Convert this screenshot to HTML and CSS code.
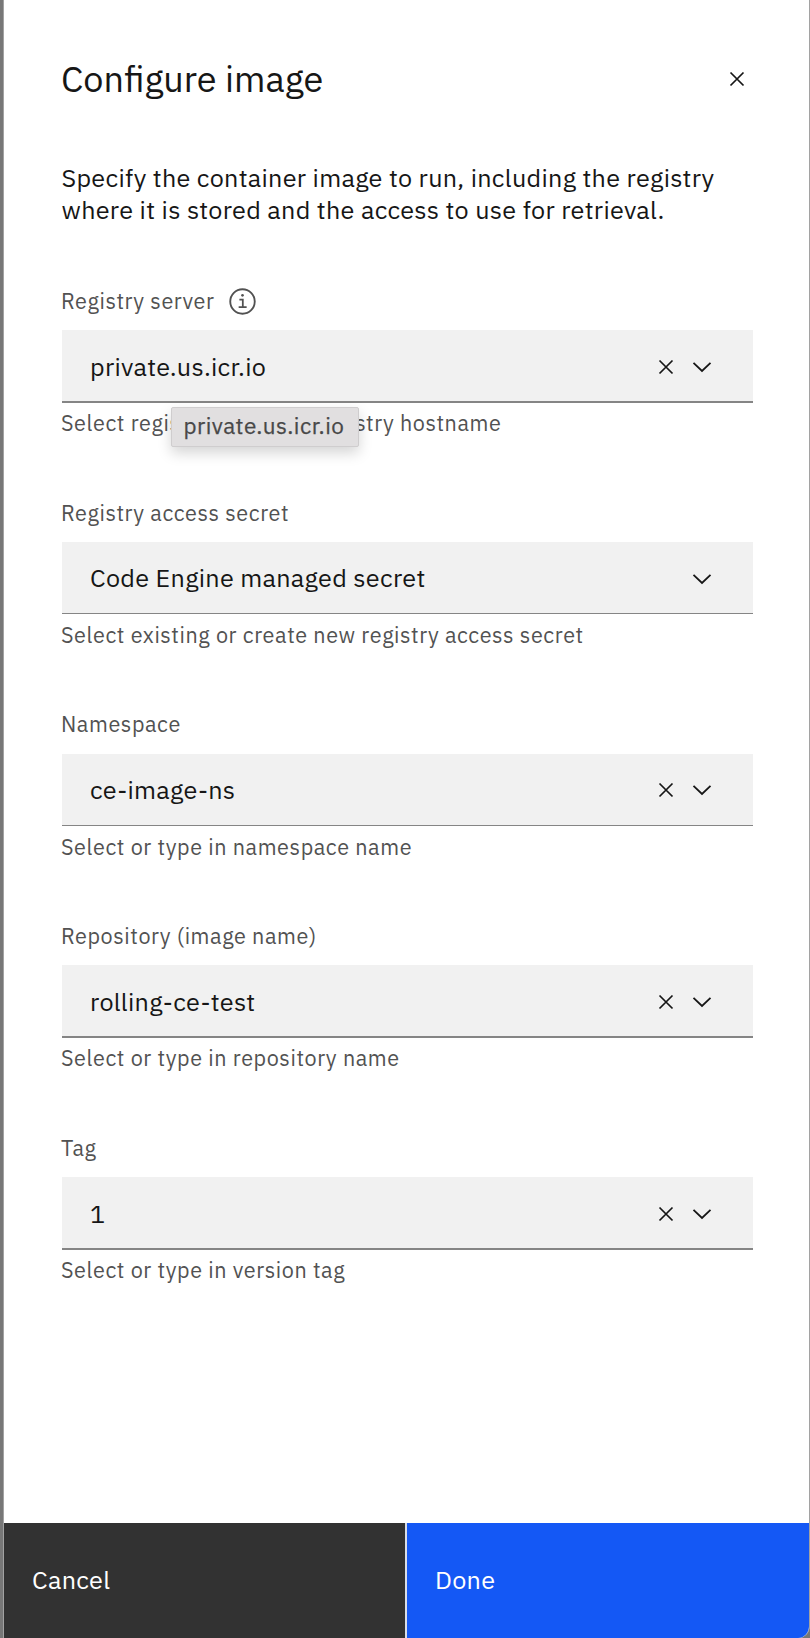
FILE: index.html
```html
<!DOCTYPE html>
<html lang="en">
<head>
<meta charset="utf-8">
<title>Configure image</title>
<link rel="stylesheet" href="styles.css">
</head>
<body>
<svg class="defs" width="0" height="0" aria-hidden="true">
  <symbol id="cross" viewBox="0 0 16 16"><path d="M1.5 1.5 14.5 14.5M14.5 1.5 1.5 14.5" fill="none" stroke="currentColor" stroke-width="1.7"/></symbol>
  <symbol id="chevron" viewBox="0 0 20 12"><path d="M1.5 1.8 10 10 18.500 1.800" fill="none" stroke="currentColor" stroke-width="1.8"/></symbol>
</svg>
<main class="panel">
  <header class="header">
    <h1 class="title">Configure image</h1>
    <button class="close" aria-label="Close"><svg class="cross"><use href="#cross"/></svg></button>
  </header>
  <p class="intro">Specify the container image to run, including the registry<br>where it is stored and the access to use for retrieval.</p>
  <form class="form">
    <section class="field">
      <div class="label">Registry server
        <svg class="info" viewBox="0 0 26 26"><circle cx="13" cy="13" r="11.800" fill="none" stroke="currentColor" stroke-width="1.8"/><path d="M10 11.200h3.300v7.300M9.300 18.500h7.700" fill="none" stroke="currentColor" stroke-width="1.700"/><circle cx="13" cy="7.100" r="1.300" fill="currentColor"/></svg>
      </div>
      <div class="box thick"><span class="value">private.us.icr.io</span><svg class="cross"><use href="#cross"/></svg><svg class="chevron"><use href="#chevron"/></svg></div>
      <div class="helper">Select registry or type in registry hostname</div>
      <div class="tooltip">private.us.icr.io</div>
    </section>
    <section class="field">
      <div class="label">Registry access secret</div>
      <div class="box"><span class="value">Code Engine managed secret</span><svg class="chevron"><use href="#chevron"/></svg></div>
      <div class="helper">Select existing or create new registry access secret</div>
    </section>
    <section class="field short">
      <div class="label">Namespace</div>
      <div class="box"><span class="value">ce-image-ns</span><svg class="cross"><use href="#cross"/></svg><svg class="chevron"><use href="#chevron"/></svg></div>
      <div class="helper">Select or type in namespace name</div>
    </section>
    <section class="field">
      <div class="label">Repository (image name)</div>
      <div class="box thick"><span class="value">rolling-ce-test</span><svg class="cross"><use href="#cross"/></svg><svg class="chevron"><use href="#chevron"/></svg></div>
      <div class="helper">Select or type in repository name</div>
    </section>
    <section class="field">
      <div class="label">Tag</div>
      <div class="box thick"><span class="value">1</span><svg class="cross"><use href="#cross"/></svg><svg class="chevron"><use href="#chevron"/></svg></div>
      <div class="helper">Select or type in version tag</div>
    </section>
  </form>
  <footer class="actions">
    <button class="button cancel">Cancel</button>
    <button class="button done">Done</button>
  </footer>
</main>
</body>
</html>
```
FILE: styles.css
```css
* { box-sizing: border-box; }
body {
  margin: 0;
  background: #777;
  color: #161616;
  font-family: "IBM Plex Sans", Roboto, "Liberation Sans", sans-serif;
}
.defs { display: block; }
button { border: 0; font: inherit; color: inherit; background: none; }
.panel {
  display: flex;
  flex-direction: column;
  height: 1638px;
  margin-left: 3px;
  padding-top: 57px;
  overflow: hidden;
  background: #fff;
  border: solid #a2a2a2;
  border-width: 0 1px;
  border-bottom-right-radius: 12px;
}
.header {
  display: flex;
  justify-content: space-between;
  align-items: center;
  height: 44px;
  padding: 0 64px 0 57px;
}
.title { margin: 0; font-size: 36px; line-height: 44px; font-weight: 400; }
.close { display: flex; padding: 0; margin-top: -3px; }
.intro {
  margin: 61px 0 0 57.500px;
  font-size: 25.2px;
  line-height: 32px;
  letter-spacing: .288px;
  white-space: nowrap;
}
.form { margin: 61px 56px 0 57.500px; }
.field {
  position: relative;
  height: 212px;
  color: #525252;
  font-size: 21.6px;
  letter-spacing: .576px;
}
.field.short { height: 211px; }
.label {
  display: flex;
  align-items: center;
  gap: 14.5px;
  height: 28px;
  line-height: 28px;
  margin: 0 0 15px -.5px;
}
.field.short .label { height: 27px; line-height: 27px; margin-bottom: 16px; }
.info { width: 27px; height: 27px; flex: none; margin-top: 1px; }
.box {
  display: flex;
  align-items: center;
  height: 72px;
  padding: 0 41px 0 28.500px;
  background: #f1f1f1;
  border-bottom: 1px solid #858585;
  color: #161616;
}
.box.thick { height: 73px; border-bottom-width: 2px; }
.value { flex: 1; padding-top: 1px; font-size: 25.2px; line-height: 32px; letter-spacing: .288px; }
.thick .value { padding-top: 3px; }
.cross { width: 16px; height: 16px; margin-top: 3px; flex: none; }
.short .cross { margin-top: 1px; }
.chevron { width: 20px; height: 12px; margin: 3px 0 0 18px; flex: none; }
.short .chevron { margin-top: 1px; }
.helper { margin: 7px 0 0 -.5px; line-height: 28px; white-space: nowrap; }
.thick + .helper { margin-top: 6px; }
.tooltip {
  position: absolute;
  left: 109px;
  top: 120px;
  width: 188px;
  height: 40px;
  padding-left: 12px;
  background: #e1dfe0;
  border: 1px solid #cfcdce;
  border-radius: 2px;
  box-shadow: 0 6px 14px rgba(0, 0, 0, .17);
  color: #484848;
  font-size: 22.5px;
  line-height: 36px;
  letter-spacing: .46px;
  -webkit-text-stroke: .25px #484848;
}
.actions { display: flex; height: 115px; margin-top: auto; background: #d8dde8; gap: 2px; }
.button { padding: 0 28px 2px; text-align: left; font-size: 25.2px; letter-spacing: .288px; color: #fff; }
.cancel { width: 401px; background: #323232; }
.done { flex: 1; background: #1458f5; }
```
